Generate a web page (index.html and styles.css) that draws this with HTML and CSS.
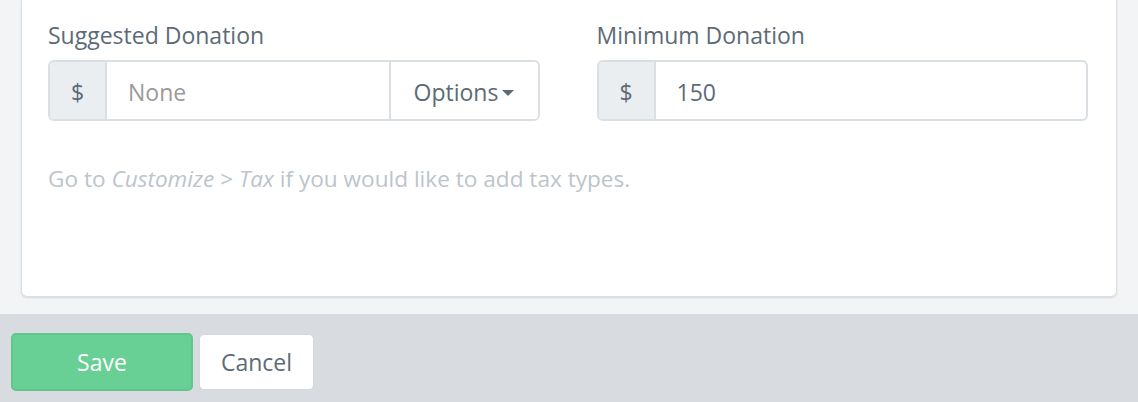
FILE: index.html
```html
<!DOCTYPE html>
<html>
<head>
<meta charset="utf-8">
<link rel="stylesheet" href="styles.css">
</head>
<body>
<div class="main">
  <div class="card">
    <div class="row">
      <div class="field">
        <label class="label">Suggested Donation</label>
        <div class="group">
          <span class="addon">$</span>
          <input class="input" type="text" placeholder="None">
          <button class="options">Options <span class="caret"></span></button>
        </div>
      </div>
      <div class="field">
        <label class="label">Minimum Donation</label>
        <div class="group">
          <span class="addon">$</span>
          <input class="input" type="text" value="150">
        </div>
      </div>
    </div>
    <p class="help">Go to <em>Customize</em> &gt; <em>Tax</em> if you would like to add tax types.</p>
  </div>
</div>
<div class="footer">
  <button class="btn save">Save</button>
  <button class="btn cancel">Cancel</button>
</div>
</body>
</html>
```
FILE: styles.css
```css
* { box-sizing: border-box; }
html, body { margin: 0; padding: 0; }
body {
  font-family: "Open Sans", "Noto Sans", sans-serif;
  background: #f3f4f6;
  color: #5c6b77;
  height: 402px;
  overflow: hidden;
}
.main {
  height: 314px;
  padding: 0 21px;
}
.card {
  height: 297px;
  background: #fff;
  border: 1px solid #dcdfe3;
  border-top: none;
  border-radius: 0 0 6px 6px;
  box-shadow: 0 1px 2px rgba(0,0,0,0.12);
  padding: 20px 28px 0 26px;
}
.row {
  display: flex;
  gap: 57px;
}
.field { flex: 1 1 0; min-width: 0; display: flex; flex-direction: column; }
.label {
  font-size: 23px;
  line-height: 30px;
  color: #5c6b77;
  margin-bottom: 10px;
}
.group {
  display: flex;
  height: 61px;
  border: 2px solid #dadfe3;
  border-radius: 6px;
  overflow: hidden;
  background: #fff;
}
.addon {
  width: 57px;
  flex: none;
  background: #ebeef1;
  border-right: 2px solid #dadfe3;
  display: flex;
  align-items: center;
  justify-content: center;
  padding-top: 2px;
  font-size: 23px;
  color: #5c6b77;
}
.input {
  flex: 1;
  min-width: 0;
  border: none;
  outline: none;
  padding: 3px 0 0 21px;
  font-family: inherit;
  font-size: 23px;
  color: #5c6b77;
  background: transparent;
}
.input::placeholder { color: #9a9a9a; }
.options {
  flex: none;
  width: 149px;
  border: none;
  border-left: 2px solid #dadfe3;
  background: #fff;
  font-family: inherit;
  font-size: 23px;
  color: #5c6b77;
  display: flex;
  align-items: center;
  justify-content: center;
  gap: 4px;
  padding: 3px 0 0;
}
.caret {
  width: 0; height: 0;
  border-left: 6px solid transparent;
  border-right: 6px solid transparent;
  border-top: 6px solid #5c6b77;
  margin-top: 2px;
}
.help {
  margin: 42px 0 0;
  font-size: 22.6px;
  color: #bcc4cc;
}
.footer {
  height: 88px;
  background: #d8dce0;
  display: flex;
  align-items: flex-start;
  gap: 6px;
  padding: 19px 0 0 11px;
}
.btn {
  font-family: inherit;
  font-size: 23px;
  border-radius: 5px;
  padding: 0;
  cursor: pointer;
}
.save {
  width: 182px;
  height: 58px;
  background: #68cf95;
  border: 2px solid #5dc88a;
  color: #fff;
}
.cancel {
  width: 115px;
  height: 56px;
  margin-top: 1px;
  background: #fff;
  border: 1px solid #d3d8dc;
  color: #5c6b77;
}
```
